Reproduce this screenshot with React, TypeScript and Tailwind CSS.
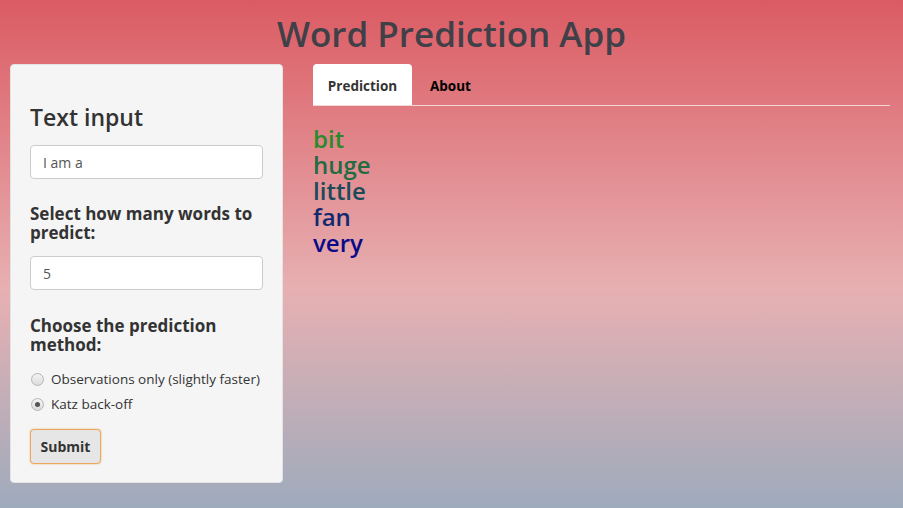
import { useState } from 'react';

const words = [
    { text: 'bit', color: 'text-[#2b8a2b]' },
    { text: 'huge', color: 'text-[#236b42]' },
    { text: 'little', color: 'text-[#1b4a59]' },
    { text: 'fan', color: 'text-[#13296f]' },
    { text: 'very', color: 'text-[#0a0a88]' },
];

function Radio({ label, checked, onClick }: { label: string; checked: boolean; onClick: () => void }) {
    return (
        <label onClick={onClick} className="flex items-center gap-[7px] h-[25px] cursor-pointer text-[13.5px] text-[#333] whitespace-nowrap">
            <span className="w-[13px] h-[13px] rounded-full border border-[#b5b5b5] bg-[linear-gradient(#f3f3f3,#dcdcdc)] flex items-center justify-center ml-[1px]">
                {checked && <span className="w-[5px] h-[5px] rounded-full bg-[#555]" />}
            </span>
            {label}
        </label>
    );
}

export default function App() {
    const [method, setMethod] = useState('katz');
    const [tab, setTab] = useState('prediction');

    return (
        <div className="w-[903px] h-[508px] overflow-hidden bg-[linear-gradient(to_bottom,#db5b63_0%,#e7b0b2_57%,#9eabbc_100%)] font-['Open_Sans',sans-serif] text-[#333]">
            <h1 className="text-center text-[35px] font-semibold text-[#3f4048] pt-[11px] h-[64px] leading-[46px]">
                Word Prediction App
            </h1>

            <div className="flex px-[10px]">
                {/* Sidebar well */}
                <div className="w-[273px] h-[419px] bg-[#f5f5f5] border border-[#e3e3e3] rounded-[4px] px-[19px] pt-[38px]">
                    <h3 className="text-[23px] font-semibold leading-[28px] text-[#333] mb-[14px]">Text input</h3>
                    <input
                        defaultValue="I am a"
                        className="w-[233px] h-[34px] bg-white border border-[#ccc] rounded-[4px] px-[12px] text-[14px] text-[#555] outline-none"
                    />

                    <label className="block mt-[25px] text-[17px] font-bold leading-[19px] text-[#333]">
                        Select how many words to predict:
                    </label>
                    <input
                        defaultValue="5"
                        className="mt-[14px] w-[233px] h-[34px] bg-white border border-[#ccc] rounded-[4px] px-[12px] text-[14px] text-[#555] outline-none"
                    />

                    <label className="block mt-[26px] text-[17px] font-bold leading-[19px] text-[#333]">
                        Choose the prediction method:
                    </label>
                    <div className="mt-[13px]">
                        <Radio label="Observations only (slightly faster)" checked={method === 'obs'} onClick={() => setMethod('obs')} />
                        <Radio label="Katz back-off" checked={method === 'katz'} onClick={() => setMethod('katz')} />
                    </div>

                    <button className="mt-[12px] h-[35px] w-[71px] bg-[#e6e6e6] border border-[#e9a85e] rounded-[4px] text-[14px] font-bold text-[#333] shadow-[0_0_2px_rgba(233,168,94,0.8)]">
                        Submit
                    </button>
                </div>

                {/* Main panel */}
                <div className="ml-[30px] w-[577px]">
                    <div className="flex h-[42px] border-b border-[#f3d6d6]">
                        <button
                            onClick={() => setTab('prediction')}
                            className={`w-[99px] pt-[3px] text-[13.5px] font-bold rounded-t-[4px] h-[41px] ${tab === 'prediction' ? 'bg-white text-[#333]' : 'text-black'}`}
                        >
                            Prediction
                        </button>
                        <button
                            onClick={() => setTab('about')}
                            className={`ml-[2px] pt-[3px] px-[16px] text-[13.5px] font-bold rounded-t-[4px] h-[41px] ${tab === 'about' ? 'bg-white text-[#333]' : 'text-black'}`}
                        >
                            About
                        </button>
                    </div>

                    {tab === 'prediction' && (
                        <div className="pt-[20px]">
                            {words.map((w) => (
                                <div key={w.text} className={`text-[24px] font-semibold leading-[26px] ${w.color}`}>
                                    {w.text}
                                </div>
                            ))}
                        </div>
                    )}
                </div>
            </div>
        </div>
    );
}
